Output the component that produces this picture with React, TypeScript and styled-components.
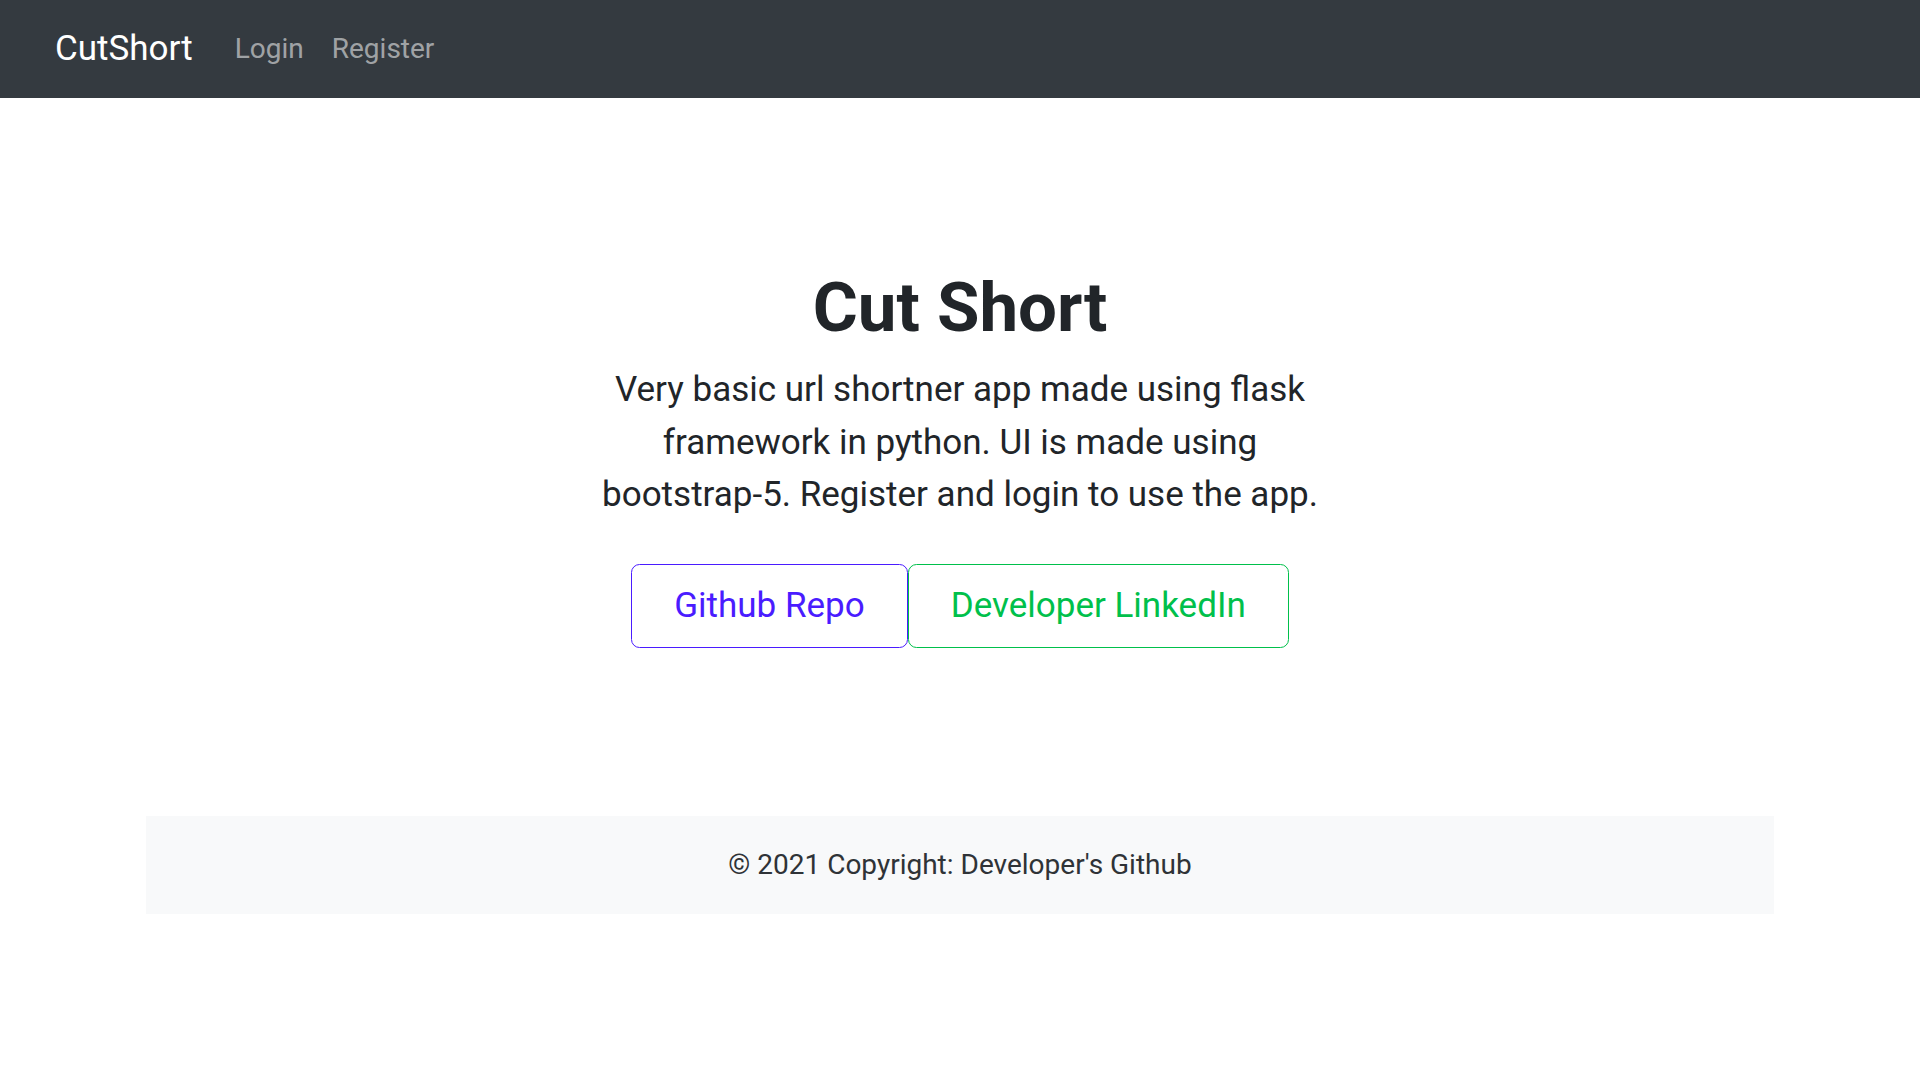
import React from "react";
import styled, { createGlobalStyle } from "styled-components";

const Global = createGlobalStyle`
  html, body { margin: 0; padding: 0; background: #ffffff; }
  body { font-family: Roboto, "Liberation Sans", Arial, sans-serif; color: #212529; }
  * { box-sizing: border-box; }
`;

const NavBar = styled.nav`
  height: 98px;
  background: #343a40;
  display: flex;
  align-items: center;
  padding: 0 55px;
`;

const Brand = styled.a`
  font-size: 35px;
  line-height: 52px;
  color: #ffffff;
  text-decoration: none;
  margin-right: 28px;
`;

const NavLinks = styled.div`
  display: flex;
  align-items: center;
`;

const NavLink = styled.a`
  font-size: 28px;
  line-height: 42px;
  padding: 0 14px;
  color: rgba(255, 255, 255, 0.55);
  text-decoration: none;
`;

const Hero = styled.section`
  margin: 84px 0;
  padding: 84px 42px;
  text-align: center;
`;

const Title = styled.h1`
  font-size: 69px;
  line-height: 84px;
  font-weight: 700;
  margin: 0 0 14px;
  color: #212529;
`;

const LeadWrap = styled.div`
  width: 760px;
  margin: 0 auto;
`;

const Lead = styled.p`
  font-size: 35px;
  line-height: 52.5px;
  font-weight: 400;
  margin: 0 0 42px;
  color: #212529;
`;

const ButtonRow = styled.div`
  display: flex;
  justify-content: center;
`;

const OutlineButton = styled.a<{ $color: string }>`
  display: inline-block;
  font-size: 35px;
  line-height: 52.5px;
  padding: 15px 42px;
  border: 1.75px solid ${(p) => p.$color};
  color: ${(p) => p.$color};
  border-radius: 8.5px;
  text-decoration: none;
`;

const Footer = styled.footer`
  width: 1628px;
  margin: 0 auto;
  background: #f8f9fa;
  padding: 28px;
  text-align: center;
  font-size: 28px;
  line-height: 42px;
  color: #2f3337;
`;

export default function App() {
  return (
    <>
      <Global />
      <NavBar>
        <Brand href="#">CutShort</Brand>
        <NavLinks>
          <NavLink href="#">Login</NavLink>
          <NavLink href="#">Register</NavLink>
        </NavLinks>
      </NavBar>
      <Hero>
        <Title>Cut Short</Title>
        <LeadWrap>
          <Lead>
            Very basic url shortner app made using flask framework in python. UI is made using
            bootstrap-5. Register and login to use the app.
          </Lead>
          <ButtonRow>
            <OutlineButton href="#" $color="#4a1cff">Github Repo</OutlineButton>
            <OutlineButton href="#" $color="#00c04b">Developer LinkedIn</OutlineButton>
          </ButtonRow>
        </LeadWrap>
      </Hero>
      <Footer>© 2021 Copyright: Developer's Github</Footer>
    </>
  );
}
